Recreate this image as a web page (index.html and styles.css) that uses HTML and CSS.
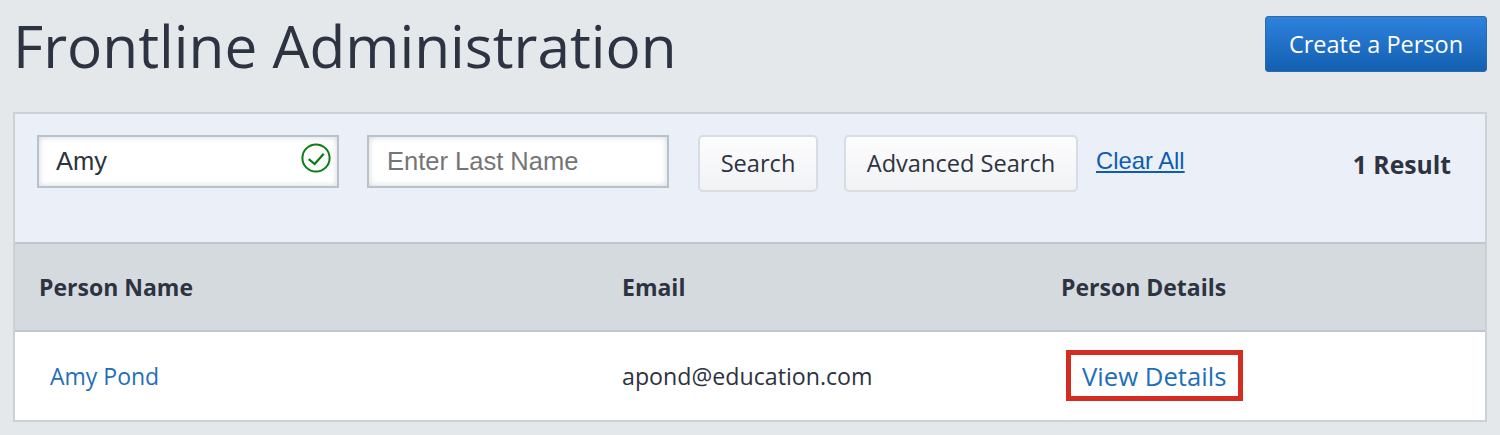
FILE: index.html
```html
<html>
  <head>
    <meta charset="UTF-8" />
    <title>Frontline Administration</title>
    <link rel="stylesheet" href="styles.css">
  </head>
  <body>
    <div class="header">
      <h1>Frontline Administration</h1>
      <button class="create" type="button">Create a Person</button>
    </div>
    <div class="panel">
      <div class="search">
        <div class="field field-first">
          <input type="text" value="Amy" />
          <svg class="check" width="30" height="30" viewBox="0 0 30 30">
            <circle cx="15" cy="15" r="13.6" fill="none" stroke="#0a7d12" stroke-width="2" />
            <path d="M7.7 16.2l6 4.8 9-10.3" fill="none" stroke="#0a7d12" stroke-width="2.2" />
          </svg>
        </div>
        <div class="field field-second">
          <input type="text" placeholder="Enter Last Name" />
        </div>
        <button class="btn btn-search" type="button">Search</button>
        <button class="btn btn-advanced" type="button">Advanced Search</button>
        <a class="clear" href="#">Clear All</a>
        <div class="result">1 Result</div>
      </div>
      <table class="people">
        <thead>
          <tr>
            <th class="col-name">Person Name</th>
            <th class="col-email">Email</th>
            <th>Person Details</th>
          </tr>
        </thead>
        <tbody>
          <tr>
            <td class="name"><a href="#">Amy Pond</a></td>
            <td class="email">apond@education.com</td>
            <td class="details"><a class="callout" href="#">View Details</a></td>
          </tr>
        </tbody>
      </table>
    </div>
  </body>
</html>
```
FILE: styles.css
```css
body {
  margin: 0;
  height: 435px;
  overflow: hidden;
  background-color: #e4e8eb;
  color: #2d3340;
  font-family: "Open Sans", sans-serif;
}
.header {
  display: flex;
  justify-content: space-between;
  align-items: flex-start;
  height: 112px;
  padding: 15px 13px 0 13px;
  box-sizing: border-box;
}
h1 {
  margin: 0;
  font-size: 58.5px;
  font-weight: 400;
  line-height: 60px;
}
.create {
  width: 222px;
  height: 56px;
  margin-top: 1px;
  border: 1px solid #2a6ca8;
  border-radius: 3px;
  background: linear-gradient(#2e81dc, #1360b2);
  color: white;
  font-family: "Open Sans", sans-serif;
  font-size: 23.5px;
}
.panel {
  margin: 0 13px;
  border: 2px solid #cdd1d5;
  background-color: #ebf0f8;
}
.search {
  display: flex;
  align-items: flex-start;
  height: 128px;
  padding: 21px 0 0 22px;
  box-sizing: border-box;
}
.field {
  position: relative;
  width: 302px;
  height: 53px;
}
.field-second {
  margin-left: 28px;
}
.field input {
  width: 100%;
  height: 100%;
  box-sizing: border-box;
  border: 2px solid #b8c2cc;
  padding: 0 0 0 18px;
  box-shadow: inset 0 0 6px #d4d4d4;
  color: #2d3340;
  font-family: "Liberation Sans", Arial, sans-serif;
  font-size: 25.5px;
}
.field-first input {
  padding-left: 17px;
}
.field input::placeholder {
  color: #757575;
  opacity: 1;
}
.check {
  position: absolute;
  top: 8px;
  right: 8px;
}
.btn {
  height: 57px;
  border: 2px solid #d8dde2;
  border-radius: 5px;
  background: linear-gradient(#fdfdfe, #f1f2f4);
  color: #2d3340;
  font-family: "Open Sans", sans-serif;
  font-size: 23.6px;
  padding: 0 0 2px;
}
.btn-search {
  width: 120px;
  margin-left: 29px;
}
.btn-advanced {
  width: 234px;
  margin-left: 26px;
}
.clear {
  margin: 12px 0 0 18px;
  color: #0f5cb0;
  font-family: "Liberation Sans", Arial, sans-serif;
  font-size: 23.8px;
}
.result {
  margin: 13px 0 0 auto;
  padding-right: 34px;
  font-size: 24.7px;
  font-weight: 700;
}
.people {
  width: 100%;
  border-collapse: collapse;
  background-color: white;
}
.people th {
  height: 88px;
  padding: 0 0 1px 24px;
  box-sizing: border-box;
  border-top: 2px solid #bfc6ce;
  border-bottom: 2px solid #bfc6ce;
  background-color: #d5dadf;
  font-size: 23px;
  font-weight: 700;
  text-align: left;
}
.people td {
  height: 89px;
  padding: 0;
  font-size: 23.2px;
}
.col-name {
  width: 583px;
}
.col-email {
  width: 439px;
}
.people a {
  color: #1f6fb8;
  text-decoration: none;
}
.people td.name {
  padding-left: 35px;
  font-size: 23px;
}
.people td.email {
  padding-left: 24px;
}
.people td.details {
  padding-left: 29px;
}
.people a.callout {
  display: inline-block;
  margin-bottom: 2px;
  border: 5px solid #d22d20;
  padding: 4px 11px 2px;
  font-size: 25.7px;
  line-height: 35px;
}
```
